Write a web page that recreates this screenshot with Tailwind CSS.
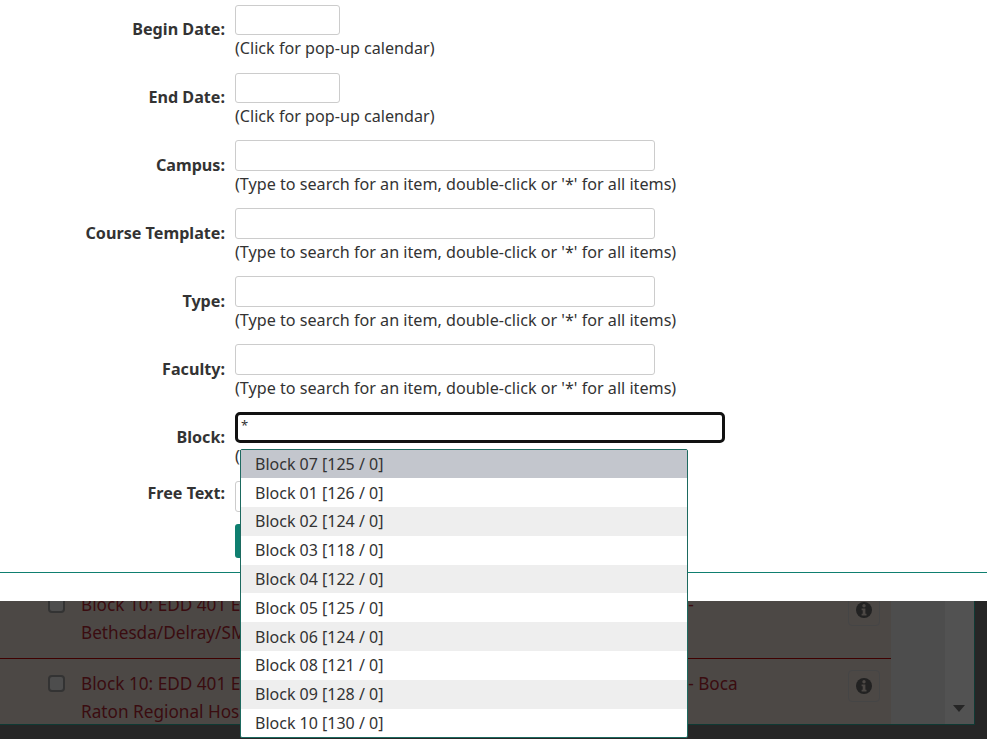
<!doctype html>
<html>
<head>
<meta charset="utf-8">
<script src="https://cdn.jsdelivr.net/npm/@tailwindcss/browser@4"></script>
</head>
<body class="bg-white">
<div class="relative h-[739px] w-[987px] overflow-hidden font-['Noto_Sans','Lato',sans-serif] text-[16.15px] leading-[20px] text-[#333]">
  <div class="h-[601px] bg-white">
    <div class="h-[572px] border-b-0 pt-[5px]">
      <div class="flex h-[68px]"><div class="w-[225px] pt-[14px] text-right font-bold">Begin Date:</div><div class="ml-[10px]"><div class="h-[30px] w-[105px] rounded-[3px] border border-[#ccc]"></div><div class="mt-[3px]">(Click for pop-up calendar)</div></div></div>
      <div class="flex h-[67px]"><div class="w-[225px] pt-[14px] text-right font-bold">End Date:</div><div class="ml-[10px]"><div class="h-[30px] w-[105px] rounded-[3px] border border-[#ccc]"></div><div class="mt-[3px]">(Click for pop-up calendar)</div></div></div>
      <div class="flex h-[68px]"><div class="w-[225px] pt-[15px] text-right font-bold">Campus:</div><div class="ml-[10px]"><div class="h-[31px] w-[420px] rounded-[3px] border border-[#ccc]"></div><div class="mt-[3px]">(Type to search for an item, double-click or '*' for all items)</div></div></div>
      <div class="flex h-[68px]"><div class="w-[225px] pt-[15px] text-right font-bold">Course Template:</div><div class="ml-[10px]"><div class="h-[31px] w-[420px] rounded-[3px] border border-[#ccc]"></div><div class="mt-[3px]">(Type to search for an item, double-click or '*' for all items)</div></div></div>
      <div class="flex h-[68px]"><div class="w-[225px] pt-[15px] text-right font-bold">Type:</div><div class="ml-[10px]"><div class="h-[31px] w-[420px] rounded-[3px] border border-[#ccc]"></div><div class="mt-[3px]">(Type to search for an item, double-click or '*' for all items)</div></div></div>
      <div class="flex h-[68px]"><div class="w-[225px] pt-[15px] text-right font-bold">Faculty:</div><div class="ml-[10px]"><div class="h-[31px] w-[420px] rounded-[3px] border border-[#ccc]"></div><div class="mt-[3px]">(Type to search for an item, double-click or '*' for all items)</div></div></div>
      <div class="flex h-[69px]"><div class="w-[225px] pt-[15px] text-right font-bold">Block:</div><div class="ml-[10px]"><div class="h-[31px] w-[490px] rounded-[5px] border-[3px] border-[#111] pl-[3px] text-[13px] leading-[20px]">*</div><div class="mt-[3px]">(Type to search for an item, double-click or '*' for all items)</div></div></div>
      <div class="flex h-[43px]"><div class="w-[225px] pt-[2px] text-right font-bold">Free Text:</div><div class="ml-[10px]"><div class="h-[31px] w-[420px] rounded-[3px] border border-[#ccc]"></div><div class="mt-[12px] h-[34px] w-[80px] rounded-[3px] bg-[#0f7f70]"></div></div></div>
    </div>
    <div class="h-px bg-[#0f7f70]"></div>
  </div>
  <div class="h-[138px] bg-[#262626]">
    <div class="flex h-[124px] w-[975px] border-r border-b border-[#0f3a34] bg-[#505050]">
      <div class="h-[123px] w-[891px] overflow-hidden bg-[#4c4845] text-[17.2px] leading-[28px] text-[#3a0c10]">
        <div class="flex h-[58px] items-start border-b border-[#3f0000] pl-[48px]">
          <div class="mt-[-5px] h-[17px] w-[17px] shrink-0 rounded-[4px] border-2 border-[#333] bg-[#4d4d4d]"></div>
          <div class="ml-[16px] mt-[-10px] w-[750px]">Block 10: EDD 401 Educational Leadership Seminar and Practicum, Section. -<br>Bethesda/Delray/SMH Regional</div>
          <div class="ml-[17px] mt-[-7px] flex h-[32px] w-[32px] shrink-0 items-center justify-center rounded-[4px] border border-[#454545]"><svg viewBox="0 0 16 16" class="h-[16px] w-[16px]"><circle cx="8" cy="8" r="8" fill="#222"/><circle cx="8" cy="3.8" r="1.7" fill="#4c4845"/><path d="M5.6 6.6h3.8v5.2h1.1v1.6H5.6v-1.6h1.1V8.2H5.6z" fill="#4c4845"/></svg></div>
        </div>
        <div class="flex items-start pl-[48px] pt-[11px]">
          <div class="mt-[5px] h-[17px] w-[17px] shrink-0 rounded-[4px] border-2 border-[#333] bg-[#4d4d4d]"></div>
          <div class="ml-[16px] w-[750px]">Block 10: EDD 401 Educational Leadership Seminar and Practicum, Section. - Boca<br>Raton Regional Hospital</div>
          <div class="ml-[17px] flex h-[32px] w-[32px] shrink-0 items-center justify-center rounded-[4px] border border-[#454545]"><svg viewBox="0 0 16 16" class="h-[16px] w-[16px]"><circle cx="8" cy="8" r="8" fill="#222"/><circle cx="8" cy="3.8" r="1.7" fill="#4c4845"/><path d="M5.6 6.6h3.8v5.2h1.1v1.6H5.6v-1.6h1.1V8.2H5.6z" fill="#4c4845"/></svg></div>
        </div>
      </div>
      <div class="h-[123px] w-[54px] bg-[#4d4d4d]"></div>
      <div class="relative h-[123px] flex-1 bg-[#525252]"><div class="absolute left-[8px] top-[104px] h-0 w-0 border-x-[6.5px] border-t-[7px] border-x-transparent border-t-[#262626]"></div></div>
    </div>
  </div>
  <ul class="absolute left-[240px] top-[449px] h-[289px] w-[448px] rounded-[2px] border border-[#1d6a60] bg-white text-[16px] text-[#333]">
    <li class="h-[28px] bg-[#c3c6cd] pl-[14px] leading-[28px]">Block 07 [125 / 0]</li>
    <li class="h-[29px] pl-[14px] leading-[30px]">Block 01 [126 / 0]</li>
    <li class="h-[29px] bg-[#eee] pl-[14px] leading-[28px]">Block 02 [124 / 0]</li>
    <li class="h-[29px] pl-[14px] leading-[28px]">Block 03 [118 / 0]</li>
    <li class="h-[28px] bg-[#eee] pl-[14px] leading-[28px]">Block 04 [122 / 0]</li>
    <li class="h-[29px] pl-[14px] leading-[30px]">Block 05 [125 / 0]</li>
    <li class="h-[29px] bg-[#eee] pl-[14px] leading-[30px]">Block 06 [124 / 0]</li>
    <li class="h-[29px] pl-[14px] leading-[28px]">Block 08 [121 / 0]</li>
    <li class="h-[29px] bg-[#eee] pl-[14px] leading-[28px]">Block 09 [128 / 0]</li>
    <li class="h-[28px] pl-[14px] leading-[28px]">Block 10 [130 / 0]</li>
  </ul>
</div>
</body>
</html>
